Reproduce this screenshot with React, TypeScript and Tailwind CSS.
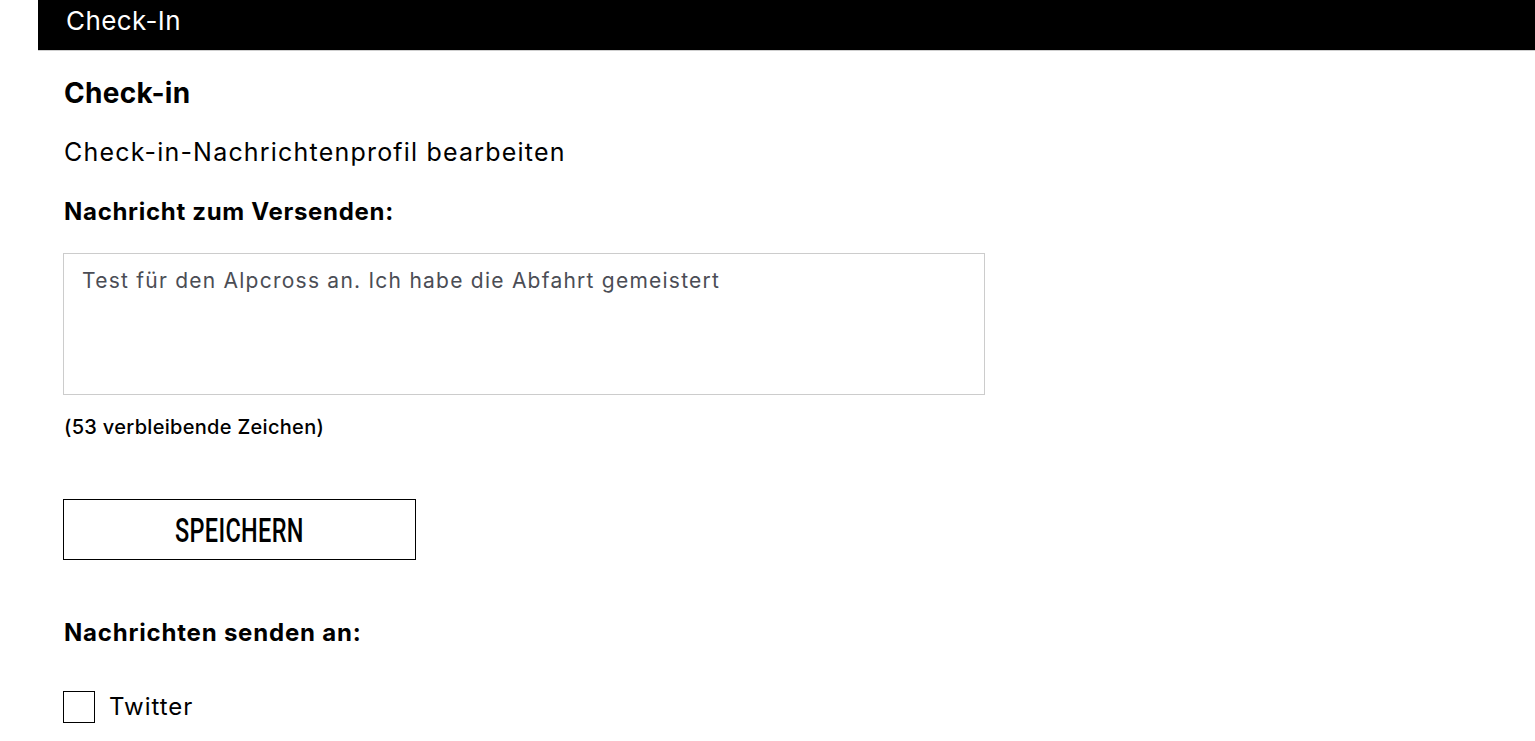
import { useState } from 'react';

const MAX_LENGTH = 140;

export default function App() {
  const [message, setMessage] = useState('Test für den Alpcross an. Ich habe die Abfahrt gemeistert');
  const [twitter, setTwitter] = useState(false);

  return (
    <div className="min-h-screen bg-white text-black font-['Inter',sans-serif]">
      <header className="ml-[38px] h-[51px] bg-black border-b border-[#cfcfcf] flex items-center pl-[28px] pb-[9px]">
        <h1 className="text-white text-[26px] leading-none tracking-[0.4px]">Check-In</h1>
      </header>

      <main className="pl-[63px] pt-[25px]">
        <h2 className="pl-px text-[28px] font-bold leading-[34px] tracking-[0.3px]">Check-in</h2>
        <p className="pl-px mt-[27px] text-[25px] leading-[30px] tracking-[1.2px]">
          Check-in-Nachrichtenprofil bearbeiten
        </p>

        <label htmlFor="message" className="pl-px block mt-[30px] text-[24px] font-bold leading-[30px] tracking-[0.7px]">
          Nachricht zum Versenden:
        </label>
        <textarea
          id="message"
          value={message}
          maxLength={MAX_LENGTH}
          onChange={(e) => setMessage(e.target.value)}
          className="block mt-[26px] w-[922px] h-[142px] border border-[#cccccc] px-[18px] py-[12px] text-[21px] leading-[30px] tracking-[1.24px] text-[#4b4d55] resize-none outline-none"
        />
        <p className="pl-px mt-[19px] text-[20px] font-medium leading-[26px] tracking-[0.3px]">
          ({MAX_LENGTH - message.length - 30} verbleibende Zeichen)
        </p>

        <button className="mt-[59px] w-[353px] h-[61px] border border-black flex items-center justify-center">
          <span className="inline-block scale-x-[0.69] font-['Roboto',sans-serif] font-medium text-[34px] leading-none tracking-[0.5px]">
            SPEICHERN
          </span>
        </button>

        <h3 className="pl-px mt-[58px] text-[24px] font-bold leading-[30px] tracking-[0.8px]">
          Nachrichten senden an:
        </h3>

        <label className="mt-[43px] flex items-center gap-[14px] cursor-pointer">
          <input
            type="checkbox"
            checked={twitter}
            onChange={(e) => setTwitter(e.target.checked)}
            className="appearance-none w-[32px] h-[32px] border border-black bg-white checked:bg-black"
          />
          <span className="text-[24px] leading-[30px] tracking-[1px]">Twitter</span>
        </label>
      </main>
    </div>
  );
}
